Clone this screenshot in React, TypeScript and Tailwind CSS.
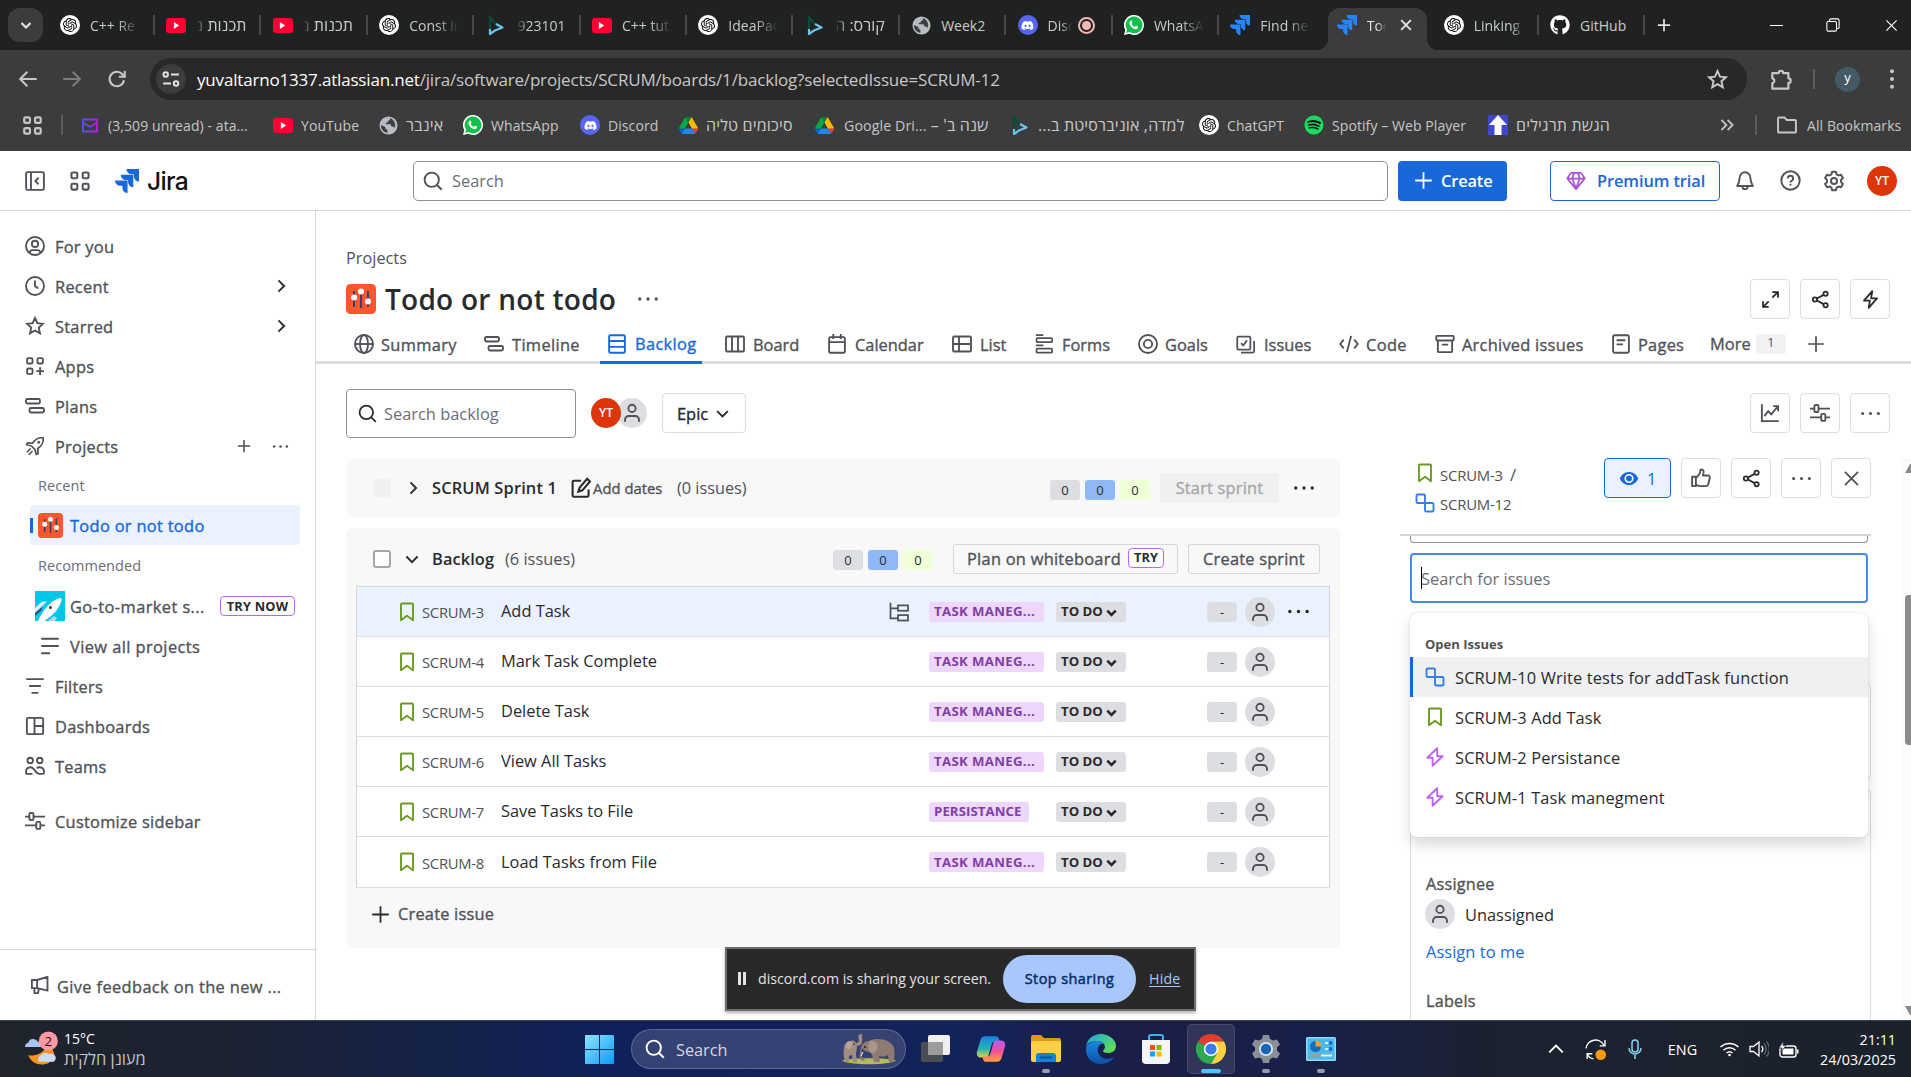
import React from "react";
import { FaDiscord, FaGithub, FaSpotify } from "react-icons/fa";
import { SiOpenai } from "react-icons/si";

type IconProps = { className?: string; children?: React.ReactNode; w?: number };

function I({ className = "size-5", children, w = 1.5 }: IconProps) {
  return (
    <svg viewBox="0 0 16 16" fill="none" stroke="currentColor" strokeWidth={w} className={"shrink-0 " + className}>
      {children}
    </svg>
  );
}

/* Medium weight: a hairline stroke thickens the regular face. */
const med = "[-webkit-text-stroke:0.35px]";

/* ---------- generic icons ---------- */
const Dots = ({ className = "size-5" }: IconProps) => (
  <I className={className} w={0}>
    <g fill="currentColor">
      <circle cx="2" cy="8" r="1.2" />
      <circle cx="8" cy="8" r="1.2" />
      <circle cx="14" cy="8" r="1.2" />
    </g>
  </I>
);
const Plus = ({ className = "size-5", w = 1.5 }: IconProps) => (
  <I className={className} w={w}><path d="M8 1v14M1 8h14" /></I>
);
const ChevR = ({ className = "size-5" }: IconProps) => <I className={className}><path d="M6 3.5 10.5 8 6 12.5" /></I>;
const ChevD = ({ className = "size-5", w = 1.5 }: IconProps) => <I className={className} w={w}><path d="M3.5 6 8 10.5 12.5 6" /></I>;
const Close = ({ className = "size-5", w = 1.5 }: IconProps) => <I className={className} w={w}><path d="m2.5 2.5 11 11M13.5 2.5l-11 11" /></I>;
const Search = ({ className = "size-5" }: IconProps) => (
  <I className={className}><circle cx="7" cy="7" r="5.7" /><path d="m11 11 4 4" /></I>
);
const Grid4 = ({ className = "size-5", w = 1.5 }: IconProps) => (
  <I className={className} w={w}>
    <rect x="1.75" y="1.75" width="4.3" height="4.3" rx="1" /><rect x="9.95" y="1.75" width="4.3" height="4.3" rx="1" />
    <rect x="1.75" y="9.95" width="4.3" height="4.3" rx="1" /><rect x="9.95" y="9.95" width="4.3" height="4.3" rx="1" />
  </I>
);
const Star = ({ className = "size-5" }: IconProps) => (
  <I className={className}><path strokeLinejoin="miter" d="m8 1.6 1.9 4.2 4.5.5-3.4 3 1 4.6L8 11.6l-4 2.3 1-4.6-3.4-3 4.5-.5z" /></I>
);
const Roadmap = ({ className = "size-5" }: IconProps) => (
  <I className={className}><rect x=".75" y="2.4" width="11.2" height="3.6" rx="1.2" /><rect x="3.6" y="9.6" width="11.6" height="3.6" rx="1.2" /></I>
);
const Customize = ({ className = "size-5" }: IconProps) => (
  <I className={className}>
    <path d="M0 4.5h3.5M6.8 4.5H16M0 11.5h9M12.5 11.5H16" /><rect x="3.5" y="1.6" width="3.3" height="5.6" rx="1" /><rect x="9" y="8.7" width="3.3" height="5.6" rx="1" />
  </I>
);
const Share = ({ className = "size-5" }: IconProps) => (
  <I className={className}>
    <circle cx="3.3" cy="8" r="1.8" /><circle cx="12.3" cy="3.2" r="1.8" /><circle cx="12.3" cy="12.8" r="1.8" /><path d="m5 7.2 5.6-3.1M5 8.8l5.6 3.1" />
  </I>
);
const Story = ({ className = "size-5" }: IconProps) => (
  <I className={className + " text-[#6a9a23]"}><path strokeLinejoin="round" d="M3.2 1.75a.6.6 0 0 1 .6-.6h8.4a.6.6 0 0 1 .6.6v12.8L8 11 3.2 14.55z" /></I>
);
const Subtask = ({ className = "size-5" }: IconProps) => (
  <I className={className + " text-[#357de8]"}><rect x="1.2" y="1.2" width="6.8" height="6.8" rx="1" /><rect x="8" y="8" width="6.8" height="6.8" rx="1" /></I>
);
const Epic = ({ className = "size-5" }: IconProps) => (
  <I className={className + " text-[#bf63f3]"}><path strokeLinejoin="round" d="M9.8 1 1.8 8.6h4.3V15l8-7.6H9.8z" /></I>
);
const Person = ({ className = "size-5" }: IconProps) => (
  <I className={className}><circle cx="8" cy="4.3" r="2.9" /><path d="M2.4 15v-1.6a3 3 0 0 1 3-3h5.2a3 3 0 0 1 3 3V15" /></I>
);

/* ---------- brand marks ---------- */
const JiraMark = ({ className = "" }: IconProps) => (
  <svg viewBox="0 0 24 24" className={"shrink-0 " + className} fill="currentColor">
    <path d="M12.575 11.513H0a5.218 5.218 0 0 0 5.232 5.215h2.13v2.057A5.215 5.215 0 0 0 12.575 24z" />
    <path d="M18.295 5.757H5.736a5.215 5.215 0 0 0 5.215 5.214h2.129v2.058a5.218 5.218 0 0 0 5.215 5.214z" />
    <path d="M24 0H11.455a5.215 5.215 0 0 0 5.215 5.215h2.129v2.057A5.215 5.215 0 0 0 24 12.483z" />
  </svg>
);
const Gpt = () => (
  <span className="flex size-5 shrink-0 items-center justify-center rounded-full bg-white text-black"><SiOpenai size={14} /></span>
);
const Yt = () => (
  <span className="relative flex h-[15px] w-5 shrink-0 items-center justify-center rounded-[3px] bg-[#ff0033]">
    <svg viewBox="0 0 8 8" className="size-[7px]" fill="#fff"><path d="M1 0l6 4-6 4z" /></svg>
  </span>
);
const Wa = () => (
  <svg viewBox="0 0 20 20" className="size-5 shrink-0">
    <path d="M10 0a10 10 0 1 1-4.8 18.8L0 20l1.3-5A10 10 0 0 1 10 0z" fill="#fff" />
    <path d="M10 1.6a8.4 8.4 0 1 1-4.4 15.5l-3.4.9.9-3.3A8.4 8.4 0 0 1 10 1.6z" fill="#11c04b" />
    <path d="M7 5.4c.5 0 .6.1.8.6l.7 1.6c.1.4-.8 1.2-.8 1.4.6 1.3 1.7 2.2 3.1 2.9.3 0 .9-1.1 1.2-1.1l2 1c.2.3 0 1.3-.5 1.8-1.1.9-2.3.9-4-.1-2.200-1-4.100-3.300-4.100-5.400 0-1.200.8-2.700 1.600-2.700z" fill="#fff" />
  </svg>
);
const Dc = () => (
  <span className="flex size-5 shrink-0 items-center justify-center rounded-full bg-[#5865f2] text-white"><FaDiscord size={13} /></span>
);
const Globe = () => (
  <svg viewBox="0 0 20 20" className="size-[19px] shrink-0">
    <circle cx="10" cy="10" r="9.5" fill="#b8bcc2" />
    <path d="M11.5 2.2c.5 1.600-.3 2.300-1.500 2.900-1 .5-.4 1.900-1.800 2-1.100.1-1.600.7-.9 1.700h4.200c1.200 0 1.500 1.200 1.500 2.300 1.600 0 3 .3 3.600 1.500a8 8 0 0 0-5.100-10.400zM2 9.500c1.500 1 3.200 1 4.300 2 .9.9.4 2.500 2 2.700.8.1.7 1.700.4 3.600A8 8 0 0 1 2 9.500z" fill="#3c4043" />
  </svg>
);
const Drive = () => (
  <svg viewBox="0 0 87.3 78" className="h-[17px] w-[19px] shrink-0">
    <path d="m6.6 66.85 3.85 6.65c.8 1.4 1.95 2.5 3.3 3.3l13.75-23.8h-27.5c0 1.55.4 3.1 1.2 4.5z" fill="#0066da" />
    <path d="m43.65 25-13.75-23.8c-1.35.8-2.5 1.9-3.3 3.3l-25.4 44a9.06 9.06 0 0 0 -1.2 4.5h27.5z" fill="#00ac47" />
    <path d="m73.55 76.8c1.35-.8 2.5-1.9 3.3-3.3l1.6-2.75 7.65-13.25c.8-1.4 1.2-2.95 1.2-4.5h-27.5l5.85 11.5z" fill="#ea4335" />
    <path d="m43.65 25 13.75-23.8c-1.35-.8-2.9-1.2-4.5-1.2h-18.5c-1.6 0-3.15.45-4.5 1.2z" fill="#00832d" />
    <path d="m59.8 53h-32.3l-13.75 23.8c1.35.8 2.9 1.2 4.5 1.2h50.8c1.6 0 3.15-.45 4.5-1.2z" fill="#2684fc" />
    <path d="m73.4 26.5-12.7-22c-.8-1.4-1.95-2.5-3.3-3.3l-13.75 23.8 16.15 28h27.45c0-1.55-.4-3.1-1.2-4.5z" fill="#ffba00" />
  </svg>
);
const Bgu = () => (
  <svg viewBox="0 0 20 20" className="size-5 shrink-0" fill="none" strokeWidth="2.2">
    <path d="M4 19V2l6 7.500" stroke="#0b4a33" /><path d="M10 9l6.500 3.500L9.500 15.200 4 19v-5" stroke="#6cc5e9" strokeLinejoin="round" />
  </svg>
);
const UpArrow = () => (
  <svg viewBox="0 0 20 20" className="size-5 shrink-0"><path fill="#3f48cc" d="M0 0h20v20H0z" /><path fill="#fff" d="M10 0l9 10h-5.500v10h-7V10H1z" /></svg>
);
const Mail = () => (
  <svg viewBox="0 0 16 14" className="h-[15px] w-4 shrink-0" fill="none" strokeWidth="1.8">
    <defs><linearGradient id="ml"><stop stopColor="#4a55e8" /><stop offset="1" stopColor="#b51ee8" /></linearGradient></defs>
    <path d="M1 1h14v12H1zM1 4l7 4.500L15 4" stroke="url(#ml)" />
  </svg>
);

function ProjectIcon({ className }: { className: string }) {
  return (
    <svg viewBox="0 0 30 30" className={"shrink-0 " + className}>
      <rect width="30" height="30" rx="4.500" fill="#ff5630" />
      <path d="M8 7v16M15 5v19M22 7v16" stroke="#344563" strokeWidth="2" />
      <g fill="#fff"><circle cx="8" cy="13.500" r="3" /><circle cx="15" cy="7.500" r="3" /><circle cx="22" cy="17.500" r="3" /></g>
    </svg>
  );
}

/* ---------- browser chrome ---------- */
const fadeR = "[mask-image:linear-gradient(to_right,#000_55%,transparent)]";
const fadeL = "[mask-image:linear-gradient(to_left,#000_75%,transparent)]";
const tabs: { icon: React.ReactNode; text: string; rtl?: boolean; sep?: boolean; fade?: string }[] = [
  { icon: <Gpt />, text: "C++ Re", sep: true, fade: fadeR },
  { icon: <Yt />, text: "תכנות מ", rtl: true, sep: true, fade: fadeL + " text-[16px]" },
  { icon: <Yt />, text: "תכנות מ", rtl: true, sep: true, fade: fadeL + " text-[16px]" },
  { icon: <Gpt />, text: "Const in", sep: true, fade: fadeR },
  { icon: <Bgu />, text: "923101", rtl: true, sep: true, fade: fadeL },
  { icon: <Yt />, text: "C++ tut", sep: true, fade: fadeR },
  { icon: <Gpt />, text: "IdeaPad", sep: true, fade: fadeR },
  { icon: <Bgu />, text: "קורס: ה", rtl: true, sep: true, fade: fadeL + " text-[16px]" },
  { icon: <Globe />, text: "Week2", sep: true },
];

function Tab({ icon, text, rtl, sep, fade = "" }: (typeof tabs)[number]) {
  return (
    <div className="flex h-[50px] w-[106.4px] shrink-0 items-center">
      <span className="flex w-5 justify-center">{icon}</span>
      <span dir={rtl ? "rtl" : "ltr"} className={"ml-[10px] w-[50px] overflow-hidden whitespace-nowrap " + fade}>{text}</span>
      {sep && <span className="ml-[13px] h-5 w-[2px] bg-[#46484a]" />}
    </div>
  );
}

function TabStrip() {
  return (
    <div className="flex h-[50px] shrink-0 items-center bg-[#202222] text-[14px] text-[#c9cbcb]">
      <div className="ml-2 flex h-[34px] w-[35px] items-center justify-center rounded-xl bg-[#3c3c3c] text-[#e3e3e3]"><ChevD className="size-4" w={2.2} /></div>
      <div className="ml-[17px] flex">
        {tabs.map((t, i) => <Tab key={i} {...t} />)}
        <div className="flex w-[106.4px] items-center">
          <Dc />
          <span className={"ml-[10px] w-[24px] overflow-hidden whitespace-nowrap " + fadeR}>Disc</span>
          <span className="ml-[6px] flex size-[17px] items-center justify-center rounded-full border-2 border-[#f2b8b5]"><i className="size-[9px] rounded-full bg-[#f2b8b5]" /></span>
          <span className="ml-[16px] h-5 w-[2px] bg-[#46484a]" />
        </div>
        <Tab icon={<Wa />} text="WhatsA" sep fade={fadeR} />
        <Tab icon={<JiraMark className="size-5 text-[#2684ff]" />} text="Find ne" fade={fadeR} />
      </div>
      <div className="relative -ml-[9px] mt-[8px] flex h-[42px] w-[99px] shrink-0 items-center rounded-t-[12px] bg-[#3c3c3c] pb-2 pl-[9px] text-[#e3e3e3]">
        <span className="absolute -left-3 bottom-0 size-3 bg-[radial-gradient(circle_at_0_0,#202222_12px,#3c3c3c_12.5px)]" />
        <span className="absolute -right-3 bottom-0 size-3 bg-[radial-gradient(circle_at_100%_0,#202222_12px,#3c3c3c_12.5px)]" />
        <JiraMark className="size-5 text-[#2684ff]" />
        <span className={"ml-[10px] w-[19px] overflow-hidden whitespace-nowrap " + fadeR}>Tod</span>
        <Close className="ml-[13px] size-[14px]" w={2.2} />
      </div>
      <div className="ml-[17px] flex">
        <Tab icon={<Gpt />} text="Linking" sep fade="[mask-image:linear-gradient(to_right,#000_75%,transparent)]" />
        <Tab icon={<FaGithub size={20} color="#fff" />} text="GitHub" sep />
      </div>
      <Plus className="ml-[1px] size-[14px] text-[#e3e3e3]" w={2} />
      <div className="ml-auto flex items-center pr-[12px] text-white">
        <span className="mr-[43px] h-px w-[13px] bg-white" />
        <I className="mr-[44px] size-[14px]" w={1.2}><rect x="1" y="4" width="11" height="11" rx="1.5" /><path d="M4 4V2.500A1.500 1.500 0 0 1 5.500 1H13a2 2 0 0 1 2 2v7.500A1.500 1.500 0 0 1 13.500 12H12" /></I>
        <Close className="size-[15px]" w={1.2} />
      </div>
    </div>
  );
}

function Toolbar() {
  return (
    <div className="flex h-[58px] shrink-0 items-center bg-[#3c3c3c] text-[#c7c7c7]">
      <I className="ml-[18px] size-[20px]" w={1.6}><path d="M15 8H2M7.500 2.200 1.700 8l5.800 5.800" /></I>
      <I className="ml-[24px] size-[20px] text-[#7c7c7c]" w={1.6}><path d="M1 8h13M8.500 2.200 14.300 8l-5.800 5.800" /></I>
      <I className="ml-[25px] size-[20px]" w={1.7}><path d="M13.600 9A5.800 5.800 0 1 1 12.300 4.200L14 6M14.200 1.500v4.700H9.500" /></I>
      <div className="ml-[23px] flex h-[42px] w-[1597px] items-center rounded-full bg-[#282828]">
        <span className="ml-[6px] flex size-[30px] items-center justify-center rounded-full bg-[#3c3c3c] text-[#e3e3e3]">
          <I className="size-[18px]" w={1.7}><circle cx="3.3" cy="4" r="2" /><path d="M8 4h7M1 12h7" /><circle cx="12.5" cy="12" r="2" /></I>
        </span>
        <span className="ml-[11px] whitespace-nowrap pt-[2px] text-[17px] tracking-[-0.180px] text-[#c7c7c7]"><span className="text-white">yuvaltarno1337.atlassian.net</span>/jira/software/projects/SCRUM/boards/1/backlog?selectedIssue=SCRUM-12</span>
        <Star className="ml-auto mr-[19px] size-[21px]" />
      </div>
      <svg viewBox="0 0 20 20" className="ml-[23px] size-[23px]" fill="none" stroke="currentColor" strokeWidth="1.9"><path strokeLinejoin="round" d="M2 4.500h5.500a2 2 0 0 1 4 0H16V9a2 2 0 0 1 0 4v5H2v-4.700a2.200 2.200 0 0 0 0-4.300z" /></svg>
      <span className="ml-[20px] h-5 w-[2px] bg-[#606060]" />
      <span className="ml-[20px] flex size-[25px] items-center justify-center rounded-full bg-[#455a64] pb-[2px] text-[13px] text-white">y</span>
      <I className="ml-[22px] size-5" w={0}><g fill="currentColor"><circle cx="8" cy="1.8" r="1.6" /><circle cx="8" cy="8" r="1.6" /><circle cx="8" cy="14.2" r="1.6" /></g></I>
    </div>
  );
}

const marks: { w: string; icon: React.ReactNode; text: React.ReactNode; rtl?: boolean; gap?: string }[] = [
  { w: "w-[191px]", icon: <Mail />, text: "(3,509 unread) - ata...", gap: "gap-[10px]" },
  { w: "w-[106px]", icon: <Yt />, text: "YouTube" },
  { w: "w-[84px]", icon: <Globe />, text: "אינבר", rtl: true },
  { w: "w-[117px]", icon: <Wa />, text: "WhatsApp" },
  { w: "w-[99px]", icon: <Dc />, text: "Discord" },
  { w: "w-[136px]", icon: <Drive />, text: "סיכומים טליה", rtl: true },
  { w: "w-[195px]", icon: <Drive />, text: <>שנה ב' – <bdi dir="ltr" className="text-[14.2px] tracking-[0.1px]">Google Dri...</bdi></>, rtl: true, gap: "gap-[10px]" },
  { w: "w-[189px]", icon: <Bgu />, text: "למדה, אוניברסיטת ב...", rtl: true },
  { w: "w-[105px]", icon: <Gpt />, text: "ChatGPT" },
  { w: "w-[184px]", icon: <span className="rounded-full bg-black text-[#1ed760]"><FaSpotify size={20} /></span>, text: "Spotify – Web Player" },
  { w: "w-[180px]", icon: <UpArrow />, text: "הגשת תרגילים", rtl: true },
];

function Bookmarks() {
  return (
    <div className="flex h-[43px] shrink-0 items-center bg-[#3c3c3c] pb-[9px] text-[14px] text-[#c7c7c7]">
      <Grid4 className="ml-[22px] size-[21px]" w={1.7} />
      <span className="ml-[18px] h-5 w-[2px] bg-[#5c5c5c]" />
      <div className="ml-[19px] flex">
        {marks.map((m, i) => (
          <div key={i} className={"flex h-[22px] shrink-0 items-center whitespace-nowrap " + m.w + " " + (m.gap ?? "gap-2")}>
            {m.icon}<span dir={m.rtl ? "rtl" : "ltr"} className={m.rtl ? "text-[16px] leading-5 tracking-[0.15px]" : "tracking-[0.08px]"}>{m.text}</span>
          </div>
        ))}
      </div>
      <I className="ml-[50px] size-[18px]" w={1.6}><path d="m3 3.500 4.500 4.500L3 12.500M8.500 3.500 13 8l-4.500 4.500" /></I>
      <span className="ml-[19px] h-5 w-[2px] bg-[#5c5c5c]" />
      <I className="ml-[19px] size-[22px]" w={1.4}><path d="M1.500 3.200a.7.7 0 0 1 .7-.7h3.900l1.600 1.800h6.100a.7.7 0 0 1 .7.7v7.800a.7.7 0 0 1-.7.7H2.200a.7.7 0 0 1-.7-.7z" /></I>
      <span className="ml-[9px] whitespace-nowrap tracking-[0.08px]">All Bookmarks</span>
    </div>
  );
}

/* ---------- Jira header ---------- */
function Header() {
  return (
    <header className="flex h-[60px] shrink-0 items-center border-b border-[#d5d6d8] bg-white text-[#505258]">
      <I className="ml-[25px] size-5"><rect x=".9" y=".9" width="14.2" height="14.2" rx="1.2" /><path d="M4.800 1v14M10.800 5.300 8.300 8l2.500 2.700" /></I>
      <Grid4 className="ml-[24px] size-[22px]" />
      <JiraMark className="ml-[24px] size-[24px] text-[#1868db]" />
      <span className="ml-[8px] w-[41px] whitespace-nowrap pt-[2px] font-['Inter'] text-[24.6px] font-medium leading-none tracking-[-0.7px] text-[#101214]">Jira</span>
      <div className="ml-[225px] flex h-10 w-[975px] items-center rounded-[5px] border border-[#8c8f97] pl-[9px]">
        <Search className="size-[20px]" /><span className="ml-[9px] pt-[2px] text-[16.4px] text-[#6b6e76]">Search</span>
      </div>
      <button className="ml-[10px] flex h-10 w-[109px] items-center rounded-[4px] bg-[#1868db] pl-[16px] text-[16.4px] font-semibold tracking-[-0.15px] text-white">
        <Plus className="size-[19px]" /><span className="ml-[8px] pt-[2px]">Create</span>
      </button>
      <button className="ml-[43px] flex h-10 w-[170px] items-center rounded-[4px] border border-[#1868db] pl-[15px] text-[16.4px] font-semibold tracking-[-0.08px] text-[#1868db]">
        <I className="size-[20px] text-[#a855d8]" w={1.4}><path strokeLinejoin="round" d="M4 1.500h8l3 4.500-7 8.500L1 6zM1 6h14M5 6l3 8 3-8-1.500-4.500M5 6l1.500-4.500" /></I>
        <span className="ml-[11px] whitespace-nowrap pt-[2px]">Premium trial</span>
      </button>
      <I className="ml-[15px] size-5"><path strokeLinejoin="round" d="M8 1a4.300 4.300 0 0 0-4.300 4.300c0 3.200-1 4.700-2 6.700h12.600c-1-2-2-3.500-2-6.700A4.300 4.300 0 0 0 8 1zM6 12.500a2 2 0 0 0 4 0" /></I>
      <I className="ml-[25px] size-[21px]"><circle cx="8" cy="8" r="7" /><path d="M6 6.500a2 2 0 1 1 2.900 1.700c-.6.3-.9.6-.9 1.300" /><path d="M8 10.500v1.400" /></I>
      <I className="ml-[22px] size-[22px]" w={1.4}>
        <circle cx="8" cy="8" r="2.2" />
        <path strokeLinejoin="round" d="M6.600 1.300h2.800l.5 1.900 1.300.8 1.900-.6 1.400 2.400-1.400 1.400v1.600l1.400 1.400-1.400 2.400-1.900-.6-1.300.8-.5 1.900H6.600l-.5-1.900-1.300-.8-1.900.6-1.400-2.400 1.400-1.400V7.200L1.500 5.800l1.400-2.400 1.900.6 1.300-.8z" />
      </I>
      <span className="ml-[22px] flex size-[30px] items-center justify-center rounded-full bg-[#de350b] text-[12px] font-semibold text-white">YT</span>
    </header>
  );
}

/* ---------- sidebar ---------- */
function Nav({ icon, text, end }: { icon: React.ReactNode; text: string; end?: React.ReactNode }) {
  return (
    <div className="flex h-10 items-center pl-[25px] pr-[24px]">
      <span className="flex w-5 justify-center">{icon}</span>
      <span className={"ml-[10px] pt-[3px] " + med}>{text}</span>
      <span className="ml-auto flex items-center">{end}</span>
    </div>
  );
}

function Sidebar() {
  const chev = <ChevR className="size-[20px] text-[#292a2e]" />;
  return (
    <aside className="flex w-[316px] shrink-0 flex-col border-r border-[#d5d6d8] bg-white pt-[15px] text-[16.4px] tracking-[0.26px] text-[#505258]">
      <Nav icon={<I><circle cx="8" cy="8" r="7.2" /><circle cx="8" cy="6.3" r="2.5" /><path d="M3.600 13.500c.2-1.500 1-2.200 2.400-2.200h4c1.400 0 2.200.7 2.400 2.200" /></I>} text="For you" />
      <Nav icon={<I><circle cx="8" cy="8" r="7.2" /><path d="M8 3.500V8l2.500 2" /></I>} text="Recent" end={chev} />
      <Nav icon={<Star />} text="Starred" end={chev} />
      <Nav icon={<I><rect x="1.7" y="1.7" width="4.3" height="4.3" rx="1" /><rect x="10" y="1.7" width="4.3" height="4.3" rx="1" /><rect x="1.7" y="10" width="4.3" height="4.3" rx="1" /><path d="M12.100 9v6.200M9 12.100h6.200" /></I>} text="Apps" />
      <Nav icon={<Roadmap />} text="Plans" />
      <Nav
        icon={<I w={1.4}><path strokeLinejoin="round" d="M14.500 1.500c-4-.5-6 .7-8.500 4.300L2 5.500 1.200 7l4 1 2.800 2.800 1 4 1.500-.8-.3-4c3.600-2.500 4.800-4.500 4.300-8.500zM4.500 10 1.500 13M6 12l-3 3" /><circle cx="11" cy="5" r=".5" /></I>}
        text="Projects"
        end={<><Plus className="mr-[21px] size-[14px]" w={1.8} /><Dots className="mr-[2px] size-[17px]" /></>}
      />
      <div className="flex h-[39px] items-center pl-[38px] pt-px text-[14.5px] tracking-[0.1px] text-[#6b6e76]">Recent</div>
      <div className="ml-[30px] mr-[15px] flex h-10 items-center rounded-[4px] bg-[#e9f2fe] text-[#1868db]">
        <span className="h-[15px] w-[3px] bg-[#1868db]" />
        <ProjectIcon className="ml-[5px] size-[25px]" />
        <span className={"ml-[7px] pt-[3px] tracking-[0.32px] " + med}>Todo or not todo</span>
      </div>
      <div className="flex h-[41px] items-center pl-[38px] pt-px text-[14.5px] tracking-[0.05px] text-[#6b6e76]">Recommended</div>
      <div className="flex h-10 items-center pl-[35px]">
        <svg viewBox="0 0 30 30" className="size-[30px]">
          <path fill="#00c7e5" d="M0 0h30v30H0z" />
          <path d="M0 17l7-6.500h5L0 22z" fill="#deebff" /><path d="M0 22l7-6v3l-7 6z" fill="#344f8a" />
          <path d="M3 30C7 21 15 9 25 7c2 0 2 2 1 4-3 8-10 14-16 19z" fill="#fff" /><path d="M8 30c8-5 15-10 18-20-1 8-8 15-17 20z" fill="#cfe0ff" />
          <circle cx="15.500" cy="16.500" r="1.500" fill="#253858" /><path d="M13 30l6-5 3 2-2 3z" fill="#b3d4ff" />
        </svg>
        <span className={"ml-[5px] w-[150px] whitespace-nowrap pt-[3px] tracking-[0.42px] " + med}>Go-to-market s...</span>
        <span className="flex h-5 w-[75px] items-center justify-center rounded-[4px] border border-[#bf63f3] pt-[2px] text-[12.8px] font-bold tracking-[0.2px] text-[#292a2e]">TRY NOW</span>
      </div>
      <div className="flex h-10 items-center pl-[40px]">
        <I><path d="M1 2.200h14M1 8h14M1 13.800h7" /></I><span className={"ml-[10px] pt-[3px] tracking-[0.42px] " + med}>View all projects</span>
      </div>
      <Nav icon={<I><path d="M1 2.500h14M3.300 8h9.400M5.200 13.500h5.600" /></I>} text="Filters" />
      <Nav icon={<I><rect x="1.5" y="1.5" width="13" height="13" rx="1" /><path d="M7.600 1.500v13M7.600 8h6.900" /></I>} text="Dashboards" />
      <Nav icon={<I><circle cx="4.2" cy="3.6" r="2.2" /><circle cx="11.8" cy="3.6" r="2.2" /><path d="M6 14.300H1.500c-.7 0-.7-.5-.7-1.200C.8 10.500 2.200 9 4.300 9c4 0 3.300 5.300 7.200 5.300h3c.7 0 .7-.5.7-1.200 0-2.600-1.400-4.100-3.500-4.100-1 0-1.700.3-2.300.8" /></I>} text="Teams" />
      <div className="h-[15px]" />
      <Nav icon={<Customize />} text="Customize sidebar" />
      <div className="mt-auto flex h-[71px] shrink-0 items-center border-t border-[#d5d6d8] pl-[30px]">
        <I><path strokeLinejoin="round" d="M1.500 4h4.200L14 1.500v11L5.700 10.500H1.500zM5.700 4v6.500M3.500 10.500v4h3l.5-3.500" /></I>
        <span className={"ml-[7px] whitespace-nowrap pt-[4px] tracking-[0.37px] " + med}>Give feedback on the new ...</span>
      </div>
    </aside>
  );
}

/* ---------- project header ---------- */
const views: { w: string; g: string; t?: string; text: string; icon: React.ReactNode }[] = [
  { w: "w-[130px]", g: "gap-[7px]", t: "tracking-[0.35px]", text: "Summary", icon: <I><circle cx="8" cy="8" r="7.2" /><ellipse cx="8" cy="8" rx="3.2" ry="7.2" /><path d="M1 8h14" /></I> },
  { w: "w-[123px]", g: "gap-[8px]", t: "tracking-[0.35px]", text: "Timeline", icon: <Roadmap /> },
  { w: "w-[118px]", g: "gap-[8px]", t: "tracking-[0.35px]", text: "Backlog", icon: <I><rect x="1.7" y="1" width="12.6" height="14" rx="1" /><path d="M1.700 5.600h12.600M1.700 10.300h12.600" /></I> },
  { w: "w-[102px]", g: "gap-[8px]", text: "Board", icon: <I><rect x=".8" y="2" width="14.4" height="12" rx="1" /><path d="M5.600 2v12M10.400 2v12" /></I> },
  { w: "w-[125px]", g: "gap-[8px]", text: "Calendar", icon: <I><rect x="1.7" y="2.5" width="12.6" height="12.5" rx="1" /><path d="M1.700 6.500h12.600M5 0v4M11 0v4" /></I> },
  { w: "w-[82px]", g: "gap-[8px]", text: "List", icon: <I><rect x=".8" y="2" width="14.4" height="12" rx="1" /><path d="M5.600 2v12M1 8h14" /></I> },
  { w: "w-[104px]", g: "gap-[8px]", text: "Forms", icon: <I w={1.4}><path d="M1.500.9h6M1.500 9h6" /><rect x="2" y="3.3" width="12.5" height="3.2" rx=".8" /><rect x="2" y="11.7" width="12.5" height="3.2" rx=".8" /></I> },
  { w: "w-[98px]", g: "gap-[7px]", text: "Goals", icon: <I><circle cx="8" cy="8" r="7.2" /><circle cx="8" cy="8" r="3.3" /></I> },
  { w: "w-[103px]", g: "gap-[8px]", text: "Issues", icon: <I w={1.4}><rect x="1" y="2" width="10.5" height="10.5" rx="1" /><path d="M4 14.800h9.500a1 1 0 0 0 1-1V5.500M4 7.300l1.800 1.800 3-4" /></I> },
  { w: "w-[96px]", g: "gap-[7px]", t: "tracking-[0.35px]", text: "Code", icon: <I><path d="M3.800 4.500 1 8l2.800 3.500M12.200 4.500 15 8l-2.800 3.500M9.700 1.500l-3.400 13" /></I> },
  { w: "w-[176px]", g: "gap-[7px]", t: "tracking-[0.26px]", text: "Archived issues", icon: <I><rect x="1" y="1.5" width="14" height="3.7" rx=".8" /><path d="M2.300 5.200v8.500a.8.800 0 0 0 .8.800h9.800a.8.800 0 0 0 .8-.8V5.200M5.500 8.500h5" /></I> },
  { w: "w-[99px]", g: "gap-[7px]", t: "tracking-[0.26px]", text: "Pages", icon: <I><rect x="1.7" y="1" width="12.6" height="14" rx="1.2" /><path d="M4.500 5h7M4.500 8.300h5" /></I> },
];

const Btn = ({ children, className = "" }: { children: React.ReactNode; className?: string }) => (
  <button className={"flex size-10 items-center justify-center rounded-[4px] border border-[#dddee1] bg-white " + className}>{children}</button>
);

function ProjectHeader() {
  return (
    <div className="shrink-0">
      <div className="pl-[30px] pt-[35px] text-[16.2px] leading-6 tracking-[0.05px] text-[#505258]">Projects</div>
      <div className="mt-[9px] flex h-10 items-center pl-[30px] pr-[21px]">
        <ProjectIcon className="size-[30px]" />
        <h1 className="ml-[9px] w-[252px] whitespace-nowrap text-[28px] font-semibold leading-10 tracking-[0.26px] text-[#292a2e]">Todo or not todo</h1>
        <Dots className="size-[22px] text-[#505258]" />
        <div className="ml-auto flex gap-[10px] text-[#292a2e]">
          <Btn><I className="size-[19px]"><path d="M9.500 6.500 14 2M9.500 1.700h4.800v4.800M6.500 9.500 2 14M6.500 14.300H1.700V9.500" /></I></Btn>
          <Btn><Share className="size-[19px]" /></Btn>
          <Btn><I className="size-[19px]"><path strokeLinejoin="round" d="M9.500 1 2.500 9h5l-1 6 7-8h-5z" /></I></Btn>
        </div>
      </div>
      <div className={"flex h-[45px] items-center border-b-[3px] border-[#dddee1] pl-[38px] text-[16.4px] text-[#505258] " + med}>
        {views.map((v) => (
          <div key={v.text} className={"relative flex h-[42px] items-center whitespace-nowrap pt-[8px] " + v.w + " " + v.g + (v.text === "Backlog" ? " text-[#1868db]" : "")}>
            {v.icon}<span className={"h-6 " + (v.text === "Backlog" ? "leading-[24px] " : "leading-[26px] ") + (v.t ?? "tracking-normal")}>{v.text}</span>
            {v.text === "Backlog" && <span className="absolute -bottom-[3px] -left-[7px] h-[3px] w-[102px] bg-[#1868db]" />}
          </div>
        ))}
        <span className="mt-[9px] tracking-[0.1px]">More</span>
        <span className="ml-[5px] mt-[7px] flex h-5 w-[30px] items-center justify-center rounded-[3px] bg-[#f0f1f2] text-[12.5px] [-webkit-text-stroke:0px]">1</span>
        <Plus className="ml-[21px] mt-[7px] size-[18px]" />
      </div>
    </div>
  );
}

/* ---------- board ---------- */
const Counts = ({ className }: { className: string }) => (
  <div className={"flex gap-[5px] text-[13px] text-[#292a2e] " + className}>
    <span className="flex h-5 w-[30px] items-center justify-center rounded-[3px] bg-[#dddee1] pt-[2px]">0</span>
    <span className="flex h-5 w-[30px] items-center justify-center rounded-[3px] bg-[#8fb8f6] pt-[2px]">0</span>
    <span className="flex h-5 w-[30px] items-center justify-center rounded-[3px] bg-[#efffd6] pt-[2px]">0</span>
  </div>
);

const Avatar = () => (
  <span className="flex size-[30px] shrink-0 items-center justify-center rounded-full bg-[#dddee1] text-[#505258]"><Person className="size-5" /></span>
);

const issues = [
  ["SCRUM-3", "Add Task", "TASK MANEG..."],
  ["SCRUM-4", "Mark Task Complete", "TASK MANEG..."],
  ["SCRUM-5", "Delete Task", "TASK MANEG..."],
  ["SCRUM-6", "View All Tasks", "TASK MANEG..."],
  ["SCRUM-7", "Save Tasks to File", "PERSISTANCE"],
  ["SCRUM-8", "Load Tasks from File", "TASK MANEG..."],
];

function IssueRow({ row, active }: { row: string[]; active: boolean }) {
  return (
    <div className={"flex h-[50px] items-center border-b border-[#dddee1] pl-[40px] text-[16.4px] last:h-[51px] " + (active ? "bg-[#e9f2fe]" : "bg-white")}>
      <Story />
      <span className="ml-[5px] w-[79px] whitespace-nowrap pt-[2px] text-[14.8px] tracking-[-0.27px] text-[#505258]">{row[0]}</span>
      <span className="w-[388px] text-[#292a2e]">{row[1]}</span>
      <span className="w-[40px]">{active && <I className="size-5 text-[#505258]" w={1.4}><path d="M1.200.5V13h6M1.200 5h6" /><rect x="7.2" y="2.7" width="8" height="4.3" /><rect x="7.2" y="10.5" width="8" height="4.3" /></I>}</span>
      <span className="w-[127px]"><span className={"flex h-5 items-center whitespace-nowrap rounded-[3px] bg-[#eed7fc] pl-[5px] pt-px text-[13.2px] font-bold text-[#803fa5] " + (row[2] === "PERSISTANCE" ? "w-[100px] tracking-[0.1px]" : "w-[115px] tracking-[0.35px]")}>{row[2]}</span></span>
      <span className="flex h-5 w-[70px] items-center whitespace-nowrap rounded-[3px] bg-[#dddee1] pl-[5px] pt-px text-[13.2px] font-bold text-[#292a2e]">TO DO<ChevD className="ml-[1px] size-[15px]" w={2.8} /></span>
      <span className="ml-[81px] flex h-5 w-[30px] items-center justify-center rounded-[3px] bg-[#dddee1] pt-[2px] text-[13px] text-[#292a2e]">-</span>
      <span className="ml-[8px]"><Avatar /></span>
      {active && <Dots className="ml-[12px] size-[23px] text-[#292a2e]" />}
    </div>
  );
}

function Backlog() {
  return (
    <div className="flex w-[1024px] shrink-0 flex-col pl-[30px] pt-[20px]">
      <section className="flex h-[60px] w-[994px] shrink-0 items-center rounded-[6px] bg-[#f8f8f8] pl-[27px] text-[16.4px]">
        <span className="size-[18px] rounded-[3px] bg-[#f0f0f0]" />
        <ChevR className="ml-[12px] size-5 text-[#292a2e]" />
        <span className="ml-[9px] w-[138px] whitespace-nowrap pt-px font-semibold tracking-[0.16px] text-[#292a2e]">SCRUM Sprint 1</span>
        <I className="size-[22px] text-[#292a2e]"><path d="M8 2.700H2.700a.8.800 0 0 0-.8.800v10a.8.800 0 0 0 .8.800h10a.8.800 0 0 0 .8-.8V9" /><path d="m12.500 1.300 2 2L9 9.700l-3 1 1-3z" /></I>
        <span className={"ml-px w-[84px] whitespace-nowrap text-[14.8px] tracking-[0.02px] text-[#505258] " + med}>Add dates</span>
        <span className="whitespace-nowrap pt-px text-[16.3px] text-[#505258]">(0 issues)</span>
        <Counts className="ml-auto pt-[3px]" />
        <span className={"ml-[10px] flex h-[30px] w-[119px] items-center justify-center rounded-[3px] bg-[#f0f0f1] pt-px tracking-[0.2px] text-[#a6a7ab] " + med}>Start sprint</span>
        <Dots className="ml-[14px] mr-[25px] size-[22px] text-[#292a2e]" />
      </section>
      <section className="mt-[10px] h-[420px] w-[994px] shrink-0 rounded-[6px] bg-[#f8f8f8] px-[10px] text-[16.4px]">
        <div className="flex h-[58px] items-center pl-[17px] pt-[3px]">
          <span className="size-[18px] rounded-[3px] border-2 border-[#a5a7ad] bg-white" />
          <ChevD className="ml-[11px] size-5 text-[#292a2e]" />
          <span className="ml-[10px] w-[73px] whitespace-nowrap pt-px font-semibold tracking-[0.08px] text-[#292a2e]">Backlog</span>
          <span className="whitespace-nowrap pt-[2px] text-[#505258]">(6 issues)</span>
          <Counts className="ml-auto pt-[2px]" />
          <button className="ml-[20px] flex h-[30px] w-[225px] items-center rounded-[3px] border border-[#d5d6d8] pl-[13px] text-left text-[#505258]">
            <span className={"w-[161px] whitespace-nowrap pt-[2px] tracking-[0.26px] " + med}>Plan on whiteboard</span>
            <span className="mb-[2px] flex h-5 w-[36px] items-center justify-center rounded-[4px] border border-[#bf63f3] bg-white text-[12.8px] font-bold text-[#292a2e]">TRY</span>
          </button>
          <button className={"ml-[10px] mr-[10px] flex h-[30px] w-[132px] items-center justify-center whitespace-nowrap rounded-[3px] border border-[#d5d6d8] pt-[2px] tracking-[0.2px] text-[#505258] " + med}>Create sprint</button>
        </div>
        <div className="w-[974px] border border-b-0 border-[#d3d7dd]">
          {issues.map((r, i) => <IssueRow key={r[0]} row={r} active={i === 0} />)}
        </div>
        <div className="flex items-center pl-[15px] pt-[14px] text-[#505258]">
          <Plus className="size-[19px] text-[#292a2e]" /><span className={"ml-[8px] tracking-[0.2px] " + med}>Create issue</span>
        </div>
      </section>
    </div>
  );
}

/* ---------- issue detail ---------- */
const options: { icon: React.ReactNode; text: string }[] = [
  { icon: <Subtask />, text: "SCRUM-10 Write tests for addTask function" },
  { icon: <Story />, text: "SCRUM-3 Add Task" },
  { icon: <Epic />, text: "SCRUM-2 Persistance" },
  { icon: <Epic />, text: "SCRUM-1 Task manegment" },
];

function Detail() {
  return (
    <div className="ml-[60px] flex w-[471px] shrink-0 flex-col pt-[20px] text-[#505258]">
      <div className="flex h-[76px] shrink-0">
        <div className="ml-[15px] w-[189px] text-[14.9px] tracking-[-0.2px]">
          <div className="flex h-[30px] items-center gap-[5px]"><Story /><span className="flex items-center gap-[7px] pt-[4px]">SCRUM-3<span className="text-[17px] leading-5">/</span></span></div>
          <div className="flex h-[30px] items-center gap-[5px]"><Subtask /><span className="pt-[3px]">SCRUM-12</span></div>
        </div>
        <div className="flex gap-[10px]">
          <button className="flex h-10 w-[67px] items-center rounded-[4px] border border-[#1868db] bg-[#e9f2fe] pl-[14px] text-[16.4px] text-[#1868db]">
            <svg viewBox="0 0 20 16" className="h-[15px] w-5"><path d="M10 1C5 1 1.500 4.500.3 8c1.200 3.500 4.700 7 9.700 7s8.500-3.500 9.700-7C18.500 4.500 15 1 10 1z" fill="#1868db" /><circle cx="10" cy="8" r="4" fill="none" stroke="#fff" strokeWidth="1.7" /></svg>
            <span className="ml-[8px] pt-[3px]">1</span>
          </button>
          <Btn><I><path strokeLinejoin="round" d="M.9 7h3v7.500h-3zM4 8l3-3.500.7-3.200c1.500-.4 2.700.5 2.400 2.200L9.500 6h4c1.200 0 1.700 1 1.500 2l-1.200 5c-.3 1-.8 1.500-1.800 1.500H7L4 13.500" /></I></Btn>
          <Btn className="text-[#292a2e]"><Share className="size-[19px]" /></Btn>
          <Btn><Dots className="size-[21px]" /></Btn>
          <Btn><Close className="size-[19px]" /></Btn>
        </div>
      </div>
      <div className="h-[2px] shrink-0 bg-[#d5d6d8]" />
      <div className="ml-[10px] h-[7px] w-[458px] shrink-0 rounded-b-[4px] border border-t-0 border-[#8c8f97]" />
      <div className="ml-[10px] mt-[10px] flex h-[50px] w-[458px] shrink-0 items-center rounded-[4px] border-2 border-[#4688ec] pl-[9px] text-[16.4px] text-[#6b6e76]">
        <span className="h-[22px] w-px bg-black" /><span className="-ml-px pt-[3px]">Search for issues</span>
      </div>
      <div className="relative ml-[10px] flex grow flex-col">
        <div className="mt-[80px] h-[97px] shrink-0 rounded-[4px] border border-[#dddee1]" />
        <div className="mt-[9px] grow rounded-t-[4px] border border-b-0 border-[#dddee1] px-[15px] text-[16.2px]">
          <div className={"mt-[82px] leading-6 tracking-[0.25px] " + med}>Assignee</div>
          <div className="mt-[3px] flex items-center gap-[10px] text-[16.4px] text-[#292a2e]"><span className="-ml-px"><Avatar /></span><span className="pt-[2px]">Unassigned</span></div>
          <div className="mt-[11px] text-[16.4px] leading-6 tracking-[0.06px] text-[#1868db]">Assign to me</div>
          <div className={"mt-[25px] leading-6 tracking-[0.25px] " + med}>Labels</div>
        </div>
        <div className="absolute left-0 top-[10px] h-[224px] w-[458px] rounded-[6px] bg-white pt-[19px] shadow-[0_8px_14px_rgba(30,31,33,0.16),0_0_1px_rgba(30,31,33,0.35)]">
          <div className="h-[25px] pl-[15px] text-[13px] font-bold leading-6 text-[#505258]">Open Issues</div>
          {options.map((o, i) => (
            <div key={o.text} className={"flex h-10 items-center border-l-[3px] pl-[12px] text-[16.4px] text-[#292a2e] " + (i === 0 ? "border-[#1868db] bg-[#eff0f2]" : "border-transparent")}>
              {o.icon}<span className="ml-[10px] whitespace-nowrap pt-[2px] tracking-[0.14px]">{o.text}</span>
            </div>
          ))}
        </div>
      </div>
    </div>
  );
}

function Scrollbar() {
  return (
    <div className="ml-auto mt-[20px] flex w-[10px] flex-col items-end overflow-hidden bg-[#fbfbfb]">
      <svg viewBox="0 0 6 9" className="mt-[6px] h-[9px] w-[6px]"><path d="M0 9 5 0h1v9z" fill="#8b8b8b" /></svg>
      <div className="mt-[122px] h-[150px] w-[6px] rounded-l-[4px] bg-[#8b8b8b]" />
      <svg viewBox="0 0 6 9" className="mb-[5px] mt-auto h-[9px] w-[6px]"><path d="M0 0 5 9h1V0z" fill="#8b8b8b" /></svg>
    </div>
  );
}

function Main() {
  return (
    <main className="flex min-w-0 grow flex-col bg-white">
      <ProjectHeader />
      <div className="flex h-[74px] shrink-0 items-center pl-[30px] pr-[21px] pt-[24px]">
        <div className="mt-px flex h-[49px] w-[230px] items-center rounded-[4px] border border-[#8c8f97] pl-[11px]">
          <Search className="size-[19px] text-[#292a2e]" /><span className="ml-[7px] pt-[2px] text-[16.4px] text-[#6b6e76]">Search backlog</span>
        </div>
        <span className="z-10 ml-[15px] flex size-[30px] items-center justify-center rounded-full bg-[#de350b] text-[12px] font-semibold text-white">YT</span>
        <span className="-ml-[4px]"><Avatar /></span>
        <button className="ml-[15px] flex h-10 w-[84px] items-center rounded-[4px] border border-[#dddee1] pl-[14px] text-[16.4px] text-[#292a2e]"><span className={"pt-[2px] " + med}>Epic</span><ChevD className="ml-[5px] size-[19px]" w={1.6} /></button>
        <div className="ml-auto flex gap-[10px] text-[#505258]">
          <Btn><I><path d="M1.500 1v13.500h13.500M3.500 10.500l3-4 2.500 2.500L14 3M10.500 2.500h4v4" /></I></Btn>
          <Btn><Customize /></Btn>
          <Btn><Dots className="size-[21px]" /></Btn>
        </div>
      </div>
      <div className="flex min-h-0 grow overflow-hidden">
        <Backlog />
        <Detail />
        <Scrollbar />
      </div>
    </main>
  );
}

/* ---------- Windows taskbar ---------- */
const Cell = ({ children, dot, active }: { children: React.ReactNode; dot?: boolean; active?: boolean }) => (
  <div className="flex h-[57px] w-[55.1px] shrink-0 items-center justify-center">
    <div className={"relative flex h-[50px] w-[48px] items-center justify-center rounded-[5px] " + (active ? "border border-white/10 bg-white/10" : "")}>
      {children}
      {dot && <span className="absolute bottom-[1px] h-[4px] w-[8px] rounded-full bg-[#9a9cab]" />}
      {active && <span className="absolute bottom-[0px] h-[4px] w-[20px] rounded-full bg-[#4cc2ff]" />}
    </div>
  </div>
);

function Taskbar() {
  return (
    <footer className="flex h-[57px] shrink-0 items-center border-t border-[#3c4350] bg-[linear-gradient(to_right,#1f242c_0%,#1b2232_12%,#13214a_24%,#11205c_32%,#14225a_50%,#1b1e45_60%,#17204a_68%,#1b2130_78%,#1c222b_100%)] text-[14px] text-white">
      <svg viewBox="0 0 34 34" className="ml-[24px] size-[36px] shrink-0">
        <path d="M1 15a4 4 0 0 1 3-4 5 5 0 0 1 9-1 4 4 0 0 1 4 5z" fill="#a9c6f5" />
        <path d="M4 23c6 1 14-2 17-8 6 0 9 6 7 11-5 8-20 8-24-3z" fill="#f5941f" />
        <path d="M14 29a4 4 0 0 1 2-6 5 5 0 0 1 8-1 4 4 0 0 1 4 7z" fill="#c9ddfb" />
        <circle cx="23" cy="9.5" r="9" fill="#ff99a4" />
        <text x="23" y="13.8" fontSize="12.5" textAnchor="middle" fill="#111">2</text>
      </svg>
      <div className="ml-[4px] w-[521px] leading-5"><div>15°C</div><div className="text-[16.4px] leading-5 text-[#bfc3cb]">מעונן חלקית</div></div>
      <svg viewBox="0 0 29 29" className="size-[29px] shrink-0">
        <defs><linearGradient id="wn" x2="1" y2="1"><stop stopColor="#8fe3ff" /><stop offset="1" stopColor="#0a9cf5" /></linearGradient></defs>
        <path fill="url(#wn)" d="M1 0h13v14H0V1a1 1 0 0 1 1-1zM15 0h13a1 1 0 0 1 1 1v13H15zM0 15h14v14H1a1 1 0 0 1-1-1zM15 15h14v13a1 1 0 0 1-1 1H15z" />
      </svg>
      <div className="ml-[17px] flex h-10 w-[275px] shrink-0 items-center rounded-full border border-white/20 bg-white/15 pl-[13px]">
        <Search className="size-[20px] text-white" /><span className="ml-[11px] pt-[2px] text-[16.3px] text-[#d5d8e5]">Search</span>
        <svg viewBox="0 0 54 32" className="ml-auto mr-[9px] h-[32px] w-[54px]">
          <path d="M0 27.500c8-3 46-3 54 0-6 5-48 5-54 0z" fill="#b8b95c" />
          <path d="M3 29c-1-4-2-9-1-14 0-4 3-7 7-7 2-1 4 0 5 2 2 0 3-1 3-3-1-3-1-6 2-6l2 2c-1 0-2 0-1 2 1 5-1 8-5 8 0 3-1 6-1 9l1 7h-4l-1-7-3 1v6z" fill="#a08c80" />
          <path d="M5 9c3-2 6 0 5 4s-5 4-6 1z" fill="#b7a598" />
          <path d="M20 20c-1 3 0 6 3 6l-1 2c-4 0-5-4-4-8 0-6 3-12 9-12 8-4 22-2 25 7 1 5 0 9 0 14h-5l-1-7c-3 2-6 2-9 1l1 6h-6l-3-10c-5 0-8-2-9-4-1 2 0 3 0 5z" fill="#8d7a70" />
          <path d="M28 8c5-1 9 3 7 8s-6 6-8 2 0-8 1-10z" fill="#a9968b" /><circle cx="23" cy="14" r="1" fill="#222" /><circle cx="12" cy="11" r=".8" fill="#222" /><path d="M21 19l-2 4" stroke="#eee" strokeWidth="1" />
        </svg>
      </div>
      <div className="ml-[2px] flex">
        <Cell><svg viewBox="0 0 30 30" className="size-[30px]"><rect x="7" y="1" width="22" height="20" rx="2" fill="#f0f0f0" /><rect y="8" width="22" height="20" rx="2" fill="#555" opacity=".85" /><rect x="7" y="8" width="15" height="13" fill="#9c9c9c" /></svg></Cell>
        <Cell>
          <svg viewBox="0 0 28 28" className="size-[30px]">
            <defs>
              <linearGradient id="c1" x2="0" y2="1"><stop stopColor="#1a7fe8" /><stop offset=".6" stopColor="#26b5b0" /><stop offset="1" stopColor="#e8d53a" /></linearGradient>
              <linearGradient id="c2" x2="0" y2="1"><stop stopColor="#b45cf0" /><stop offset=".5" stopColor="#f0509a" /><stop offset="1" stopColor="#ffa23a" /></linearGradient>
            </defs>
            <path d="M9 2h9c2 0 3 1 3.500 3l.5 2h-4c-2 0-3 1-3.500 3l-2.500 9c-.5 2-1.500 3-3.500 3H5c-3 0-5-2-4-6l3-10c1-3 2-4 5-4z" fill="url(#c1)" />
            <path d="M19 26h-9c-2 0-3-1-3.500-3L6 21h4c2 0 3-1 3.500-3L16 9c.5-2 1.500-3 3.500-3H23c3 0 5 2 4 6l-3 10c-1 3-2 4-5 4z" fill="url(#c2)" />
          </svg>
        </Cell>
        <Cell dot><svg viewBox="0 0 30 28" className="h-[28px] w-[30px]"><path d="M0 2a2 2 0 0 1 2-2h8l3 3h15a2 2 0 0 1 2 2v8H0z" fill="#dd9a12" /><rect y="6" width="30" height="21" rx="2" fill="#ffcf48" /><path d="M5 27v-6a3 3 0 0 1 3-3h14a3 3 0 0 1 3 3v6z" fill="#1582d8" /><path d="M10 22.500h10" stroke="#0b4f94" strokeWidth="2" strokeLinecap="round" /></svg></Cell>
        <Cell>
          <svg viewBox="0 0 30 30" className="size-[30px]">
            <defs>
              <linearGradient id="e1" x2="1" y2=".6"><stop stopColor="#1ca4ea" /><stop offset="1" stopColor="#5fdc5a" /></linearGradient>
              <linearGradient id="e2" x2="0" y2="1"><stop stopColor="#1a8be0" /><stop offset="1" stopColor="#0c4ea8" /></linearGradient>
            </defs>
            <path d="M0 13C1 5 7 0 15 0s15 6 15 12c0 5-4 7-8 7-3 0-5-1-5-2s2-2 2-4c0-3-3-6-8-6C6 7 1 9 0 13z" fill="url(#e1)" />
            <path d="M0 14c1-4 6-7 11-7 3 0 6 1 7 3-4-1-7 3-6 8 1 4 5 7 9 7 3 0 5-1 7-2-3 5-8 7-13 7C6 30-1 23 0 14z" fill="url(#e2)" />
          </svg>
        </Cell>
        <Cell><svg viewBox="0 0 30 30" className="size-[30px]"><path d="M8 6V3a2 2 0 0 1 2-2h10a2 2 0 0 1 2 2v3" fill="none" stroke="#35b5f0" strokeWidth="2" /><path d="M1 6h28v20a4 4 0 0 1-4 4H5a4 4 0 0 1-4-4z" fill="#f5f5f5" /><path fill="#f25022" d="M9 11h5v5H9z" /><path fill="#7fba00" d="M15.500 11h5v5h-5z" /><path fill="#00a4ef" d="M9 17.500h5v5H9z" /><path fill="#ffb900" d="M15.500 17.500h5v5h-5z" /></svg></Cell>
        <Cell active>
          <svg viewBox="0 0 30 30" className="size-[30px]">
            <path d="M15 15 2 7.500A15 15 0 0 1 28 7.500H15z" fill="#e33b2e" /><path d="M15 15 2 7.500A15 15 0 0 0 15 30l6.500-11z" fill="#2da94f" /><path d="M28 7.500A15 15 0 0 1 15 30l6.500-11.200L15 7.500z" fill="#fdd23e" />
            <circle cx="15" cy="15" r="7.2" fill="#fff" /><circle cx="15" cy="15" r="5.6" fill="#3b7ded" />
          </svg>
        </Cell>
        <Cell dot>
          <svg viewBox="0 0 30 30" className="size-[30px]">
            <path d="M12 1h6l1 4 3 1.500 4-1 3 5-3 3v3l3 3-3 5-4-1-3 1.500-1 4h-6l-1-4-3-1.500-4 1-3-5 3-3v-3l-3-3 3-5 4 1L11 5z" fill="#8b9097" /><circle cx="15" cy="15" r="7" fill="#dfe5ea" /><circle cx="15" cy="15" r="5.2" fill="#1466b8" />
          </svg>
        </Cell>
        <Cell dot>
          <svg viewBox="0 0 30 24" className="h-[24px] w-[30px]">
            <rect width="30" height="24" rx="1.5" fill="#8fdcf8" /><rect x="1.5" y="1.5" width="27" height="21" fill="#4ab8ea" />
            <circle cx="9.5" cy="9.5" r="5.5" fill="#0f6fc5" /><path d="M9.500 9.500V3.500a6 6 0 0 1 6 6z" fill="#f7a12c" />
            <path d="M19 6h4M19 12h4" stroke="#fff" strokeWidth="1.5" /><circle cx="24.5" cy="6" r="2" fill="#0f6fc5" /><circle cx="24.5" cy="12" r="2" fill="#0f6fc5" /><path d="M4 18.500h11" stroke="#f28a1c" strokeWidth="1.8" /><path d="M15 18.500h11" stroke="#fff" strokeWidth="1.8" />
          </svg>
        </Cell>
      </div>
      <div className="ml-auto flex items-center pr-[15px]">
        <I className="size-[18px]" w={1.7}><path d="M2 11l6-6 6 6" /></I>
        <svg viewBox="0 0 20 20" className="ml-[20px] size-[21px]" fill="none" stroke="#fff" strokeWidth="1.3"><path d="M1 9a9 9 0 0 1 17-3M19 1v5.500h-5M2 19v-5h5M2 14a9 9 0 0 0 6 5" /><circle cx="15" cy="15" r="5" fill="#ff9a0c" stroke="none" /></svg>
        <svg viewBox="0 0 14 20" className="ml-[22px] h-[20px] w-[14px]" fill="none" stroke="#86d5f2" strokeWidth="1.5"><rect x="4" y="1" width="6" height="12" rx="3" /><path d="M1 9a6 6 0 0 0 12 0M7 16v4" /></svg>
        <span className="ml-[26px] pt-px text-[14.4px]">ENG</span>
        <svg viewBox="0 0 20 16" className="ml-[22px] h-[16px] w-[21px]" fill="none" stroke="#fff" strokeWidth="1.5"><path d="M1 6a13 13 0 0 1 18 0M4 9.200a8.500 8.500 0 0 1 12 0M7 12a4.500 4.500 0 0 1 6 0" /><circle cx="10" cy="14" r="1.3" fill="#fff" stroke="none" /></svg>
        <svg viewBox="0 0 20 18" className="ml-[9px] h-[18px] w-[20px]" fill="none" stroke="#fff" strokeWidth="1.3"><path d="M1 6.500h3.500L10 2v14l-5.500-4.500H1z" /><path d="M12.500 6a4.500 4.500 0 0 1 0 6" /><path d="M15 3.500a8 8 0 0 1 0 11M17.500 1.500a11 11 0 0 1 0 15" stroke="#60656e" /></svg>
        <svg viewBox="0 0 20 17" className="ml-[10px] h-[17px] w-[20px]"><rect x="1" y="5" width="16" height="11" rx="2.5" fill="none" stroke="#fff" strokeWidth="1.4" /><rect x="3.5" y="7.5" width="11" height="6" fill="#fff" /><path d="M18 8.500h1.500v4H18z" fill="#fff" /><path d="M4.500 0 0 7h3L2 11l5-6.500H4z" fill="#fff" stroke="#1c222b" strokeWidth=".7" /></svg>
        <div className="ml-[21px] pt-px text-right text-[14.3px] leading-5"><div>21:11</div><div>24/03/2025</div></div>
      </div>
    </footer>
  );
}

export default function App() {
  return (
    <div className="relative flex h-[1077px] w-[1911px] flex-col overflow-hidden bg-white font-['Open_Sans','Noto_Sans','DejaVu_Sans',sans-serif]">
      <TabStrip />
      <Toolbar />
      <Bookmarks />
      <Header />
      <div className="flex min-h-0 grow overflow-hidden"><Sidebar /><Main /></div>
      <Taskbar />
      <div className="absolute left-[725px] top-[947px] flex h-[64px] w-[471px] items-center border-2 border-[#6e6e6e] bg-[#282828] pl-[11px] text-[14.2px] text-[#e3e3e3] shadow-[0_2px_3px_rgba(0,0,0,0.3)]">
        <span className="mb-[2px] flex gap-[2px]"><i className="h-[13px] w-[3px] bg-[#e3e3e3]" /><i className="h-[13px] w-[3px] bg-[#e3e3e3]" /></span>
        <span className="ml-[12px] w-[245px] whitespace-nowrap">discord.com is sharing your screen.</span>
        <button className="h-[48px] w-[133px] rounded-full bg-[#a8c7fa] text-[14.4px] tracking-[0.45px] text-[#062e6f] [-webkit-text-stroke:0.5px]">Stop sharing</button>
        <span className="ml-[13px] tracking-[0.2px] text-[#a8c7fa] underline underline-offset-2">Hide</span>
      </div>
    </div>
  );
}
